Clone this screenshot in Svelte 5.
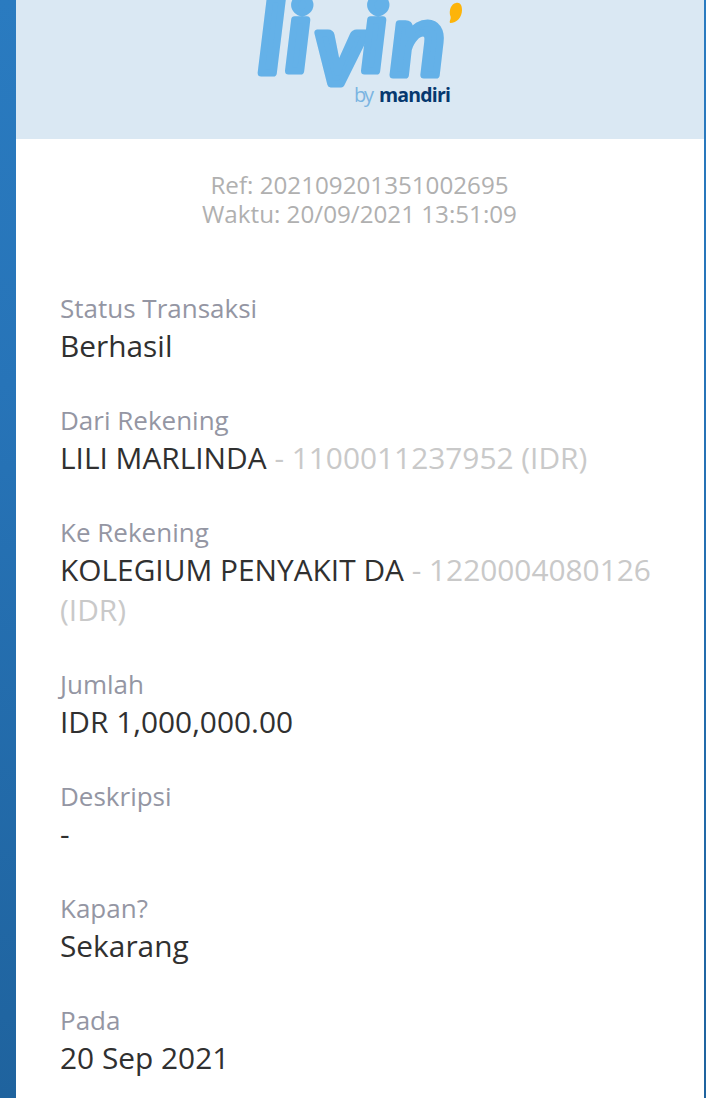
<script>
	const reference = '202109201351002695';
	const time = '20/09/2021 13:51:09';

	const details = [
		{ label: 'Status Transaksi', value: 'Berhasil' },
		{ label: 'Dari Rekening', value: 'LILI MARLINDA', account: '1100011237952 (IDR)' },
		{ label: 'Ke Rekening', value: 'KOLEGIUM PENYAKIT DA', account: '1220004080126 (IDR)' },
		{ label: 'Jumlah', value: 'IDR 1,000,000.00' },
		{ label: 'Deskripsi', value: '-' },
		{ label: 'Kapan?', value: 'Sekarang' },
		{ label: 'Pada', value: '20 Sep 2021' }
	];
</script>

<div class="page">
	<main class="receipt">
		<header>
			<svg class="logo" width="220" height="112" viewBox="250 0 220 112">
				<text class="livin" x="259 286 315 362 391" y="73 71 84 71 75">livin</text>
				<path class="drop" d="M456 3C460 2 462 5 462 10C462 17 457 23 450 23C449 20 452 19 450 15C449 10 451 4 456 3Z" />
				<text class="by" x="354" y="102" textLength="20">by</text>
				<text class="mandiri" x="379" y="102" textLength="72">mandiri</text>
			</svg>
		</header>

		<div class="meta">
			<p>Ref: {reference}</p>
			<p>Waktu: {time}</p>
		</div>

		<dl>
			{#each details as item}
				<div class="row">
					<dt>{item.label}</dt>
					<dd>
						{item.value}
						{#if item.account}
							<span>- {item.account}</span>
						{/if}
					</dd>
				</div>
			{/each}
		</dl>
	</main>
</div>

<style>
	:global(body) {
		margin: 0;
	}

	.page {
		box-sizing: border-box;
		height: 1098px;
		padding: 0 2px 0 16px;
		overflow: hidden;
		background: linear-gradient(#2a7bc0, #2774b8 35%, #1f639e);
		font-family: "Open Sans", "Noto Sans", sans-serif;
	}

	.receipt {
		height: 100%;
		background: #fff;
	}

	header {
		display: flex;
		justify-content: center;
		height: 139px;
		background: #dae8f3;
	}

	.logo {
		display: block;
	}

	.livin {
		font: italic 700 100px Lato, sans-serif;
		fill: #64b1e8;
		stroke: #64b1e8;
		stroke-width: 7;
		stroke-linejoin: round;
	}

	.drop {
		fill: #fdb409;
	}

	.by {
		font-size: 20px;
		fill: #7bb5e2;
	}

	.mandiri {
		font-size: 19.5px;
		font-weight: 700;
		fill: #06386f;
	}

	.meta {
		padding: 31px 1px 0 0;
		text-align: center;
		font-size: 24.2px;
		line-height: 29px;
		color: #b0b0b0;
	}

	p {
		margin: 0;
	}

	dl {
		margin: 0;
		padding: 62px 44px 0;
	}

	.row {
		margin-bottom: 36px;
	}

	dt {
		font-size: 26px;
		line-height: 36px;
		color: #9496a3;
	}

	dd {
		margin: 0;
		font-size: 29.85px;
		line-height: 40px;
		color: #303030;
	}

	span {
		color: #c9c9c9;
	}
</style>
